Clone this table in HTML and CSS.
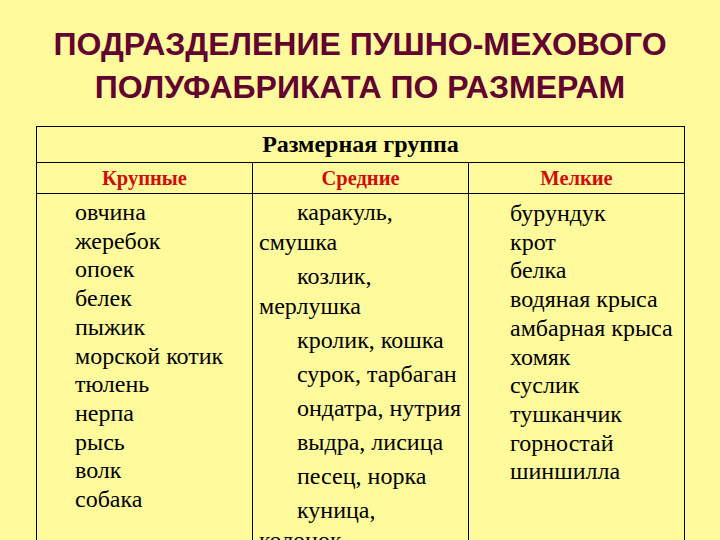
FILE: index.html
```html
<!DOCTYPE html>
<html lang="ru">
<head>
<meta charset="utf-8">
<link rel="stylesheet" href="styles.css">
</head>
<body>
<div class="page">
  <h1 class="title">
    <span class="line">ПОДРАЗДЕЛЕНИЕ ПУШНО-МЕХОВОГО</span>
    <span class="line">ПОЛУФАБРИКАТА ПО РАЗМЕРАМ</span>
  </h1>
  <table class="grid">
    <tr class="head">
      <th colspan="3">Размерная группа</th>
    </tr>
    <tr class="sub">
      <th>Крупные</th>
      <th>Средние</th>
      <th>Мелкие</th>
    </tr>
    <tr class="body">
      <td class="col col-left">
        овчина<br>жеребок<br>опоек<br>белек<br>пыжик<br>морской котик<br>тюлень<br>нерпа<br>рысь<br>волк<br>собака
      </td>
      <td class="col col-mid">
        <p>каракуль,<br>смушка</p>
        <p>козлик,<br>мерлушка</p>
        <p>кролик, кошка</p>
        <p>сурок, тарбаган</p>
        <p>ондатра, нутрия</p>
        <p>выдра, лисица</p>
        <p>песец, норка</p>
        <p>куница,<br>колонок</p>
      </td>
      <td class="col col-right">
        бурундук<br>крот<br>белка<br>водяная крыса<br>амбарная крыса<br>хомяк<br>суслик<br>тушканчик<br>горностай<br>шиншилла
      </td>
    </tr>
  </table>
</div>
</body>
</html>
```
FILE: styles.css
```css
html, body {
  margin: 0;
  padding: 0;
}
body {
  background: #fffa9c;
  width: 720px;
  height: 540px;
  overflow: hidden;
}
.page {
  padding-top: 23px;
}
.title {
  margin: 0;
  font-family: "Liberation Sans", Arial, sans-serif;
  font-weight: bold;
  font-size: 32px;
  line-height: 43px;
  color: #620330;
  text-align: center;
}
.title .line {
  display: block;
}
.grid {
  margin: 17px 0 0 36px;
  width: 649px;
  border-collapse: collapse;
  table-layout: fixed;
  font-family: "Liberation Serif", "Times New Roman", serif;
}
.grid th, .grid td {
  border: 1px solid #000;
  padding: 0;
}
.grid .head th {
  height: 35px;
  font-size: 24px;
  font-weight: bold;
  color: #000;
  text-align: center;
  vertical-align: middle;
}
.grid .sub th {
  height: 30px;
  font-size: 20.5px;
  font-weight: bold;
  color: #d00c0c;
  text-align: center;
  vertical-align: middle;
}
.grid .col {
  vertical-align: top;
  font-size: 24px;
  color: #000;
  padding-top: 4px;
}
.grid .col-left {
  line-height: 28.7px;
  padding-left: 38px;
}
.grid .col-right {
  line-height: 28.7px;
  padding-left: 41px;
  padding-top: 5px;
}
.grid .col-mid {
  line-height: 30px;
  padding-left: 6px;
  padding-top: 3px;
}
.col-mid p {
  margin: 0 0 4px;
  text-indent: 38px;
}
```
